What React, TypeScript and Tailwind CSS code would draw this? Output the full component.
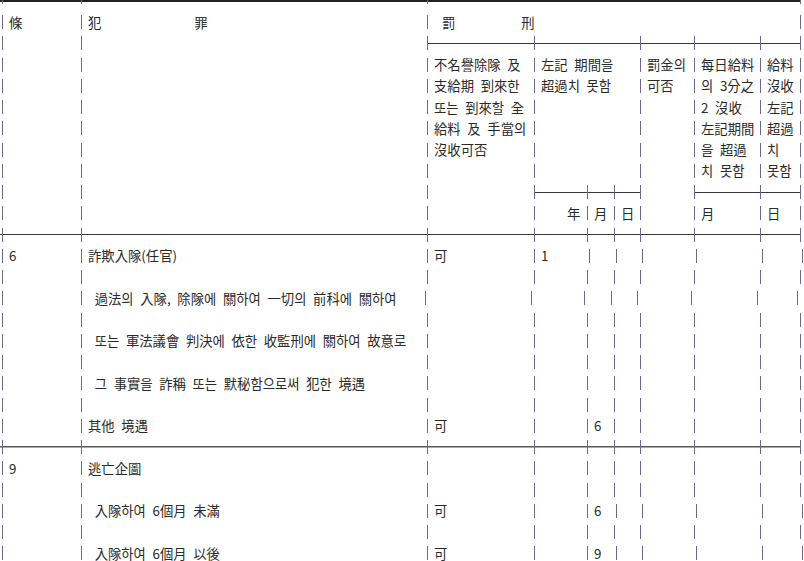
import type { ReactNode } from 'react';

type Cell = { w: string; t?: ReactNode; pad?: string; line?: boolean };
type Row = { kind: 'text' | 'line' | 'double'; cells: Cell[] };

// column widths, bar to bar
const W0 = 'w-[79px]';
const W1 = 'w-[346px]';
const W2 = 'w-[107px]';
const W3 = 'w-[53px]';
const W4 = 'w-[27px]';
const W5 = 'w-[26px]';
const W6 = 'w-[54px]';
const W7 = 'w-[66px]';
const W8 = 'w-[40px]';
const W35 = 'w-[106px]';
const W28 = 'w-[373px]';

const BODY = [W0, W1, W2, W3, W4, W5, W6, W7, W8];
const HEAD = [W0, W1, W2, W35, W6, W7, W8];

const text = (widths: string[], texts: ReactNode[] = []): Row => ({
  kind: 'text',
  cells: widths.map((w, i) => ({ w, t: texts[i] })),
});

const fullLine = (kind: 'line' | 'double'): Row => ({
  kind,
  cells: BODY.map((w) => ({ w, line: true })),
});

const ROWS: Row[] = [
  {
    kind: 'text',
    cells: [
      { w: W0, t: '條' },
      { w: W1, t: <><span>犯</span><span className="ml-[93px]">罪</span></> },
      { w: W28, pad: 'pl-[14px]', t: <><span>罰</span><span className="ml-[66px]">刑</span></> },
    ],
  },
  {
    kind: 'line',
    cells: [{ w: W0 }, { w: W1 }, ...[W2, W35, W6, W7, W8].map((w) => ({ w, line: true }))],
  },
  text(HEAD, ['', '', '不名譽除隊 及', '左記 期間을', '罰金의', '每日給料', '給料']),
  text(HEAD, ['', '', '支給期 到來한', '超過치 못함', '可否', '의 3分之', '沒收']),
  text(HEAD, ['', '', '또는 到來할 全', '', '', '2 沒收', '左記']),
  text(HEAD, ['', '', '給料 及 手當의', '', '', '左記期間', '超過']),
  text(HEAD, ['', '', '沒收可否', '', '', '을 超過', '치']),
  text(HEAD, ['', '', '', '', '', '치 못함', '못함']),
  {
    kind: 'line',
    cells: [
      { w: W0 },
      { w: W1 },
      { w: W2 },
      { w: W3, line: true },
      { w: W4, line: true },
      { w: W5, line: true },
      { w: W6 },
      { w: W7, line: true },
      { w: W8, line: true },
    ],
  },
  {
    kind: 'text',
    cells: [
      { w: W0 },
      { w: W1 },
      { w: W2 },
      { w: W3, t: '年', pad: 'pl-[32px]' },
      { w: W4, t: '月' },
      { w: W5, t: '日' },
      { w: W6 },
      { w: W7, t: '月' },
      { w: W8, t: '日' },
    ],
  },
  fullLine('line'),
  text([W0, W1, W2, 'w-[55px]', W4, W5, W6, W7, W8], ['6', '詐欺入隊(任官)', '可', '1']),
  text(BODY),
  text([W0, 'w-[344px]', 'w-[106px]', W3, W4, W5, W6, W7, W8], ['', ' 過法의 入隊, 除隊에 關하여 一切의 前科에 關하여']),
  text(BODY),
  text(BODY, ['', ' 또는 軍法議會 判決에 依한 收監刑에 關하여 故意로']),
  text(BODY),
  text(BODY, ['', ' 그 事實을 詐稱 또는 默秘함으로써 犯한 境遇']),
  text(BODY),
  text(BODY, ['', '其他 境遇', '可', '', '6']),
  fullLine('double'),
  text(BODY, ['9', '逃亡企圖']),
  text(BODY),
  text([W0, W1, W2, W3, 'w-[29px]', W5, W6, W7, W8], ['', ' 入隊하여 6個月 未滿', '可', '', '6']),
  text(BODY),
  text([W0, W1, W2, W3, 'w-[29px]', W5, W6, W7, W8], ['', ' 入隊하여 6個月 以後', '可', '', '9']),
];

function Bar() {
  return <span className="h-[14px] w-px shrink-0 bg-[#6d6592]" />;
}

function Rule({ kind }: { kind: Row['kind'] }) {
  if (kind === 'double') {
    return <span className="h-[2px] flex-1 border-y border-t-[#5a5a5a] border-b-[#a8a8a8]" />;
  }
  return <span className="h-px flex-1 bg-[#3a3a3a]" />;
}

function TableRow({ row }: { row: Row }) {
  const full = row.cells.every((c) => c.line);
  return (
    <div className="flex h-[21.25px] items-center">
      {full ? (
        <div className="flex w-[2px] shrink-0">
          <Rule kind={row.kind} />
        </div>
      ) : (
        <div className="w-[2px] shrink-0" />
      )}
      {row.cells.map((c, i) => (
        <div key={i} className={`${c.w} flex shrink-0 items-center`}>
          <Bar />
          {c.line ? (
            <Rule kind={row.kind} />
          ) : (
            c.t && <span className={`${c.pad ?? 'pl-[6px]'} whitespace-pre`}>{c.t}</span>
          )}
        </div>
      ))}
      <Bar />
    </div>
  );
}

export default function App() {
  return (
    <div className="h-[561px] w-[804px] overflow-hidden bg-white font-['Noto_Sans_CJK_KR',sans-serif] text-[13.33px] leading-none text-[#2a2a2a] [word-spacing:3.7px]">
      {/* top rule, half a line tall */}
      <div className="flex h-[11.6px] items-start">
        <span className="h-[2px] w-[2px] bg-[#222]" />
        {[W0, W1, W28].map((w) => (
          <div key={w} className={`${w} flex shrink-0 items-start`}>
            <span className="h-[4px] w-px shrink-0 bg-[#6d6592]" />
            <span className="h-[2px] flex-1 bg-[#222]" />
          </div>
        ))}
        <span className="h-[4px] w-px shrink-0 bg-[#6d6592]" />
      </div>

      {ROWS.map((row, i) => (
        <TableRow key={i} row={row} />
      ))}
    </div>
  );
}
